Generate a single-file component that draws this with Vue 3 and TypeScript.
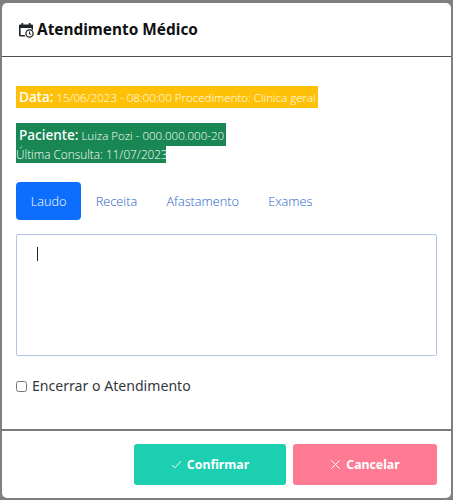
<script setup lang="ts">
const tabs: string[] = ['Laudo', 'Receita', 'Afastamento', 'Exames']
</script>

<template>
  <div class="backdrop">
    <div class="modal">
      <header class="head">
        <svg class="cal" viewBox="0 0 16 16" aria-hidden="true">
          <path d="M3.5 1v1.5H2.2C1.5 2.5 1 3 1 3.7v9.6c0 .7.5 1.2 1.2 1.2h5.3a4.8 4.8 0 0 1-1.1-1.6H2.6V6h10.8v1.3c.6.2 1.1.5 1.6.9V3.7c0-.7-.5-1.2-1.2-1.2h-1.3V1h-1.7v1.5H5.2V1z" fill="#212529"/>
          <circle cx="11.5" cy="11.5" r="3.6" fill="#fff" stroke="#212529" stroke-width="1.3"/>
          <path d="M11.5 9.6v2.1l1.4.9" fill="none" stroke="#212529" stroke-width="1.1"/>
        </svg>
        <h1>Atendimento Médico</h1>
      </header>
      <main class="body">
        <div class="info-one"><span class="bar yellow"><b>Data:</b> 15/06/2023 - 08:00:00 Procedimento: Clínica geral</span></div>
        <div class="info-two">
          <span class="bar green patient"><b>Paciente:</b> Luiza Pozi - 000.000.000-20</span>
          <span class="bar green last">Última Consulta: 11/07/2023</span>
        </div>
        <nav class="tabs">
          <a v-for="(t, i) in tabs" :key="t" class="tab" :class="{ active: i === 0 }">{{ t }}</a>
        </nav>
        <div class="area"><i class="caret"></i></div>
        <label class="check"><span class="box"></span>Encerrar o Atendimento</label>
      </main>
      <footer class="foot">
        <button class="btn ok">
          <svg viewBox="0 0 12 12" class="ico"><path d="M1 6.5l3.2 3.2L11 2.2" fill="none" stroke="#fff" stroke-width="1"/></svg>
          Confirmar
        </button>
        <button class="btn no">
          <svg viewBox="0 0 12 12" class="ico"><path d="M1.5 1.5l9 9M10.5 1.5l-9 9" fill="none" stroke="#fff" stroke-width="1"/></svg>
          Cancelar
        </button>
      </footer>
    </div>
  </div>
</template>

<style>
html, body { margin: 0; background: #7f7f7f; }
</style>

<style scoped>
.backdrop {
  width: 453px;
  height: 500px;
  box-sizing: border-box;
  padding: 3px 2px 2px;
  background: #7f7f7f;
  font-family: "Noto Sans", "Open Sans", sans-serif;
  color: #212529;
}
.modal {
  height: 495px;
  background: #fff;
  border-radius: 5px;
  display: flex;
  flex-direction: column;
}
.head {
  height: 54px;
  box-sizing: border-box;
  padding: 0 16px;
  display: flex;
  align-items: center;
  gap: 3px;
  border-bottom: 1px solid #4f4f4f;
}
.cal { width: 16px; height: 16px; }
h1 {
  margin: 0;
  font-size: 15.4px;
  font-weight: 700;
  color: #111;
}
.body {
  height: 372px;
  box-sizing: border-box;
  padding: 28px 14px 0;
  display: flex;
  flex-direction: column;
}
.bar {
  color: #fff;
  font-family: "Open Sans", sans-serif;
  font-size: 11.55px;
  font-weight: 300;
  display: inline-block;
  white-space: nowrap;
}
.bar b { font-family: "Noto Sans", sans-serif; font-weight: 500; font-size: 13.6px; }
.yellow {
  background: #ffc107;
  height: 22px;
  line-height: 22px;
  width: 302px;
  padding-left: 3px;
  box-sizing: border-box;
}
.info-one { height: 38px; }
.info-two { height: 59px; display: flex; flex-direction: column; align-items: flex-start; }
.green { background: #198754; }
.patient {
  height: 23px;
  line-height: 23px;
  width: 210px;
  padding-left: 3px;
  box-sizing: border-box;
}
.last {
  height: 17px;
  line-height: 17px;
  width: 150px;
  font-size: 11.8px;
}
.tabs { display: flex; height: 38px; margin-bottom: 14px; }
.tab {
  height: 38px;
  line-height: 38px;
  padding: 0 14.7px;
  font-family: "Open Sans", sans-serif;
  font-size: 12.7px;
  font-weight: 300;
  color: #1a62c9;
  border-radius: 4px;
}
.tab.active { background: #0d6efd; color: #fff; }
.area {
  height: 122px;
  box-sizing: border-box;
  border: 1px solid #afc6e9;
  border-radius: 2px;
  padding: 12px 20px;
  flex: none;
}
.caret {
  display: block;
  width: 1px;
  height: 14px;
  background: #212529;
}
.check {
  display: flex;
  align-items: center;
  gap: 5px;
  margin-top: 21px;
  font-size: 14.1px;
  font-weight: 400;
  line-height: 18px;
  color: #33383d;
}
.box {
  width: 9px;
  height: 9px;
  border: 1px solid #767676;
  border-radius: 2.5px;
  flex: none;
}
.foot {
  flex: 1;
  border-top: 2px solid #7a7a7a;
  padding: 13px 14px 0;
  display: flex;
  justify-content: flex-end;
  gap: 7px;
  align-items: flex-start;
}
.btn {
  height: 41px;
  border: 0;
  border-radius: 3px;
  color: #fff;
  font-family: inherit;
  font-size: 12.3px;
  font-weight: 700;
  display: flex;
  align-items: center;
  justify-content: center;
  gap: 5px;
  padding: 0;
}
.ok { width: 152px; background: #1ccfb1; }
.no { width: 144px; background: #ff7a93; }
.ico { width: 11px; height: 11px; }
</style>
